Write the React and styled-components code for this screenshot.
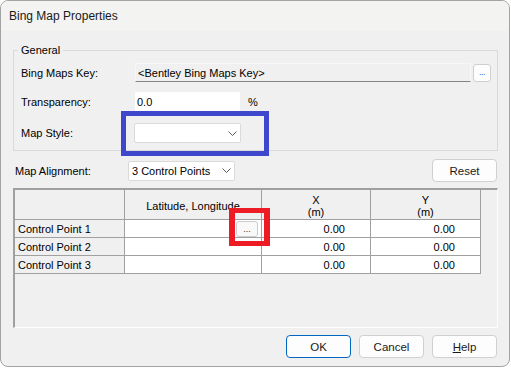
import React from 'react';
import styled, { createGlobalStyle } from 'styled-components';

const GlobalStyle = createGlobalStyle`
  html, body {
    margin: 0;
    background: #ffffff;
  }
`;

const Window = styled.div`
  width: 510px;
  height: 367px;
  box-sizing: border-box;
  border: 1px solid #a3a3a3;
  border-radius: 8px;
  overflow: hidden;
  background: #f0f0f0;
  font-family: "Liberation Sans", Arial, sans-serif;
  font-size: 11px;
  color: #000;
  display: flex;
  flex-direction: column;
`;

const TitleBar = styled.div`
  height: 30px;
  flex: none;
  display: flex;
  align-items: center;
  padding-left: 8px;
  background: #f3f3f1;
  font-size: 12px;
  color: #1a1a1a;
`;

const Body = styled.div`
  padding: 0 11px 0 12px;
  display: flex;
  flex-direction: column;
`;

const GroupBox = styled.fieldset`
  margin: 12px 0 0;
  padding: 6px 6px 7px 4px;
  border: 1px solid #d9d9d9;
  border-radius: 0;
  min-width: 0;
`;

const Legend = styled.legend`
  padding: 0 3px;
  font-size: 11px;
  line-height: 14px;
`;

const FieldRow = styled.div`
  display: flex;
  align-items: center;
  padding-left: 3px;
  margin-top: ${p => p.$gap || 0}px;
`;

const FieldLabel = styled.span`
  width: ${p => p.$width || 114}px;
  flex: none;
`;

const KeyField = styled.div`
  width: 336px;
  height: 19px;
  box-sizing: border-box;
  border: 1px solid #f7f7f7;
  border-bottom-color: #848484;
  background: #f0f0f0;
  display: flex;
  align-items: center;
  padding-left: 2px;
`;

const BrowseButton = styled.div`
  width: 18px;
  height: 18px;
  box-sizing: border-box;
  margin-left: 2px;
  border: 1px solid #cfcfcf;
  border-radius: 3px;
  background: #fdfdfd;
  color: #1f6fc4;
  font-size: 9px;
  line-height: 14px;
  text-align: center;
  letter-spacing: -0.5px;
`;

const TextField = styled.div`
  width: 105px;
  height: 20px;
  box-sizing: border-box;
  background: #fff;
  display: flex;
  align-items: center;
  padding-left: 2px;
`;

const Unit = styled.span`
  margin-left: 8px;
`;

const ComboWrap = styled.div`
  position: relative;
  margin-left: ${p => p.$shift || 0}px;
`;

const Combo = styled.div`
  width: ${p => p.$width}px;
  height: 20px;
  box-sizing: border-box;
  border: 1px solid #dadada;
  border-radius: 2px;
  background: #fff;
  display: flex;
  align-items: center;
  justify-content: space-between;
  padding: 0 3px 0 3px;
`;

// annotation boxes drawn over the dialog
const Highlight = styled.div`
  position: absolute;
  z-index: 2;
  top: ${p => p.$t}px;
  left: ${p => p.$l}px;
  width: ${p => p.$w}px;
  height: ${p => p.$h}px;
  box-sizing: border-box;
  border: solid ${p => p.$color};
  border-width: ${p => p.$bw};
  pointer-events: none;
`;

const Chevron = () => (
  <svg width="9" height="5" viewBox="0 0 9 5">
    <path d="M0.5 0.5 L4.5 4.5 L8.5 0.5" fill="none" stroke="#5c5c5c" strokeWidth="1" />
  </svg>
);

const AlignRow = styled.div`
  margin-top: 8px;
  height: 23px;
  display: flex;
  align-items: center;
  padding-left: 2px;
`;

const Spacer = styled.div`
  flex: 1;
`;

const DialogButton = styled.div`
  width: 65px;
  height: 23px;
  box-sizing: border-box;
  border: 1px solid ${p => (p.$primary ? '#0067c0' : '#d0d0d0')};
  border-radius: 4px;
  background: #fdfdfd;
  display: flex;
  align-items: center;
  justify-content: center;
  font-size: 11.5px;
  color: #1a1a1a;
  margin-right: ${p => p.$mr || 0}px;
`;

const GridFrame = styled.div`
  margin-top: 6px;
  height: 140px;
  box-sizing: border-box;
  border-top: 2px solid #a0a0a0;
  border-left: 2px solid #a0a0a0;
  border-right: 1px solid #fdfdfd;
  border-bottom: 1px solid #fdfdfd;
  background: #f0f0f0;
`;

const Grid = styled.div`
  display: grid;
  grid-template-columns: 110px 137px 109px 110px;
  grid-template-rows: 30px 18px 18px 18px;
`;

const Cell = styled.div`
  box-sizing: border-box;
  border-right: 1px solid #a0a0a0;
  border-bottom: 1px solid #a0a0a0;
  background: ${p => (p.$white ? '#fff' : '#f0f0f0')};
  display: flex;
  align-items: center;
  white-space: nowrap;
`;

const HeadCell = styled(Cell)`
  flex-direction: column;
  justify-content: center;
  padding-top: 3px;
  line-height: 12px;
`;

const RowHead = styled(Cell)`
  padding-left: 3px;
`;

const ValueCell = styled(Cell)`
  justify-content: flex-end;
  padding-right: 25px;
`;

const LatCell = styled(Cell)`
  justify-content: flex-end;
  padding-right: 3px;
`;

const CellButton = styled.div`
  position: relative;
  width: 22px;
  height: 16px;
  box-sizing: border-box;
  border: 1px solid #cdcdcd;
  border-radius: 3px;
  background: #f9f9f9;
  font-size: 9px;
  line-height: 14px;
  text-align: center;
  color: #333;
`;

const ButtonBar = styled.div`
  margin-top: 7px;
  display: flex;
  justify-content: flex-end;
  gap: 8px;
  padding-right: 1px;
`;

const points = ['Control Point 1', 'Control Point 2', 'Control Point 3'];

export default function App() {
  return (
    <>
      <GlobalStyle />
      <Window>
        <TitleBar>Bing Map Properties</TitleBar>
        <Body>
          <GroupBox>
            <Legend>General</Legend>
            <FieldRow>
              <FieldLabel>Bing Maps Key:</FieldLabel>
              <KeyField>&lt;Bentley Bing Maps Key&gt;</KeyField>
              <BrowseButton>...</BrowseButton>
            </FieldRow>
            <FieldRow $gap={10}>
              <FieldLabel>Transparency:</FieldLabel>
              <TextField>0.0</TextField>
              <Unit>%</Unit>
            </FieldRow>
            <FieldRow $gap={11}>
              <FieldLabel>Map Style:</FieldLabel>
              <ComboWrap $shift={-1}>
                <Combo $width={107}>
                  <span />
                  <Chevron />
                </Combo>
                <Highlight $color="#3f48cc" $bw="5px" $t={-12} $l={-13} $w={148} $h={45} />
              </ComboWrap>
            </FieldRow>
          </GroupBox>

          <AlignRow>
            <FieldLabel $width={113}>Map Alignment:</FieldLabel>
            <Combo $width={107}>
              <span>3 Control Points</span>
              <Chevron />
            </Combo>
            <Spacer />
            <DialogButton $mr={1}>Reset</DialogButton>
          </AlignRow>

          <GridFrame>
            <Grid>
              <HeadCell />
              <HeadCell>Latitude, Longitude</HeadCell>
              <HeadCell>
                <span>X</span>
                <span>(m)</span>
              </HeadCell>
              <HeadCell>
                <span>Y</span>
                <span>(m)</span>
              </HeadCell>
              {points.map((name, i) => (
                <React.Fragment key={name}>
                  <RowHead>{name}</RowHead>
                  <LatCell $white>
                    {i === 0 && (
                      <CellButton>
                        ...
                        <Highlight $color="#ed1c24" $bw="5px 6px" $t={-14} $l={-8} $w={41} $h={38} />
                      </CellButton>
                    )}
                  </LatCell>
                  <ValueCell $white>0.00</ValueCell>
                  <ValueCell $white>0.00</ValueCell>
                </React.Fragment>
              ))}
            </Grid>
          </GridFrame>

          <ButtonBar>
            <DialogButton $primary>OK</DialogButton>
            <DialogButton>Cancel</DialogButton>
            <DialogButton>
              <span><u>H</u>elp</span>
            </DialogButton>
          </ButtonBar>
        </Body>
      </Window>
    </>
  );
}
